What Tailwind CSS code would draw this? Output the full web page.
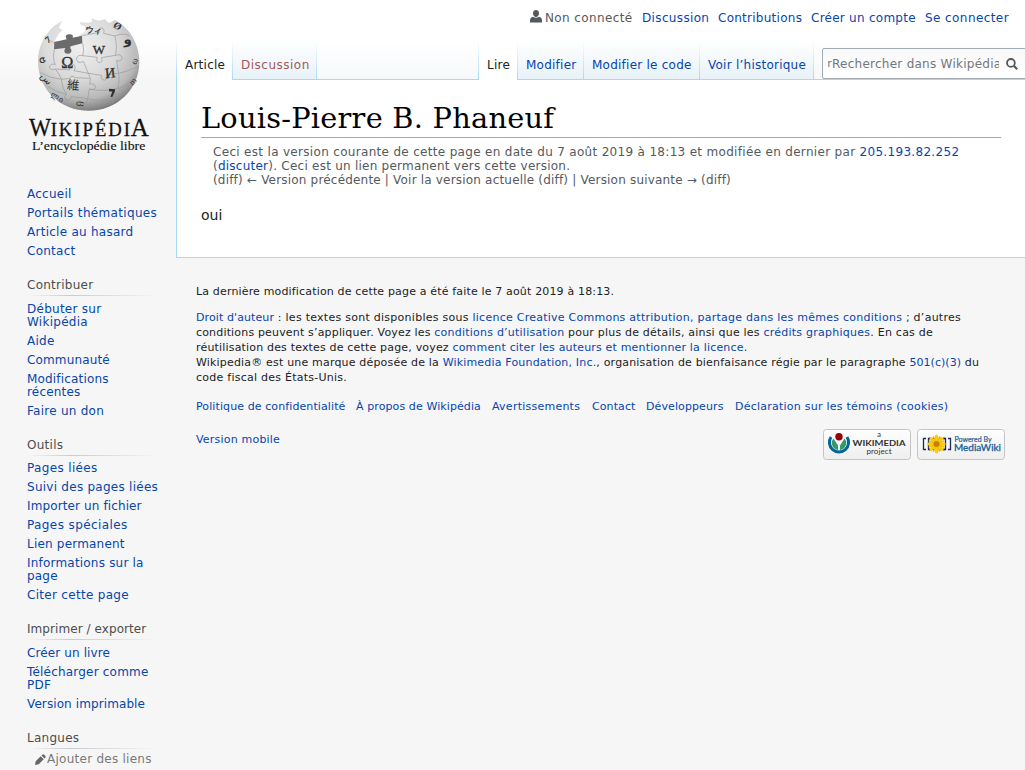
<!DOCTYPE html>
<html lang="fr">
<head>
<meta charset="utf-8">
<title>Louis-Pierre B. Phaneuf — Wikipédia</title>
<script src="https://cdn.jsdelivr.net/npm/@tailwindcss/browser@4"></script>
</head>
<body class="h-[770px] overflow-hidden bg-[#f6f6f6] font-['DejaVu_Sans',sans-serif] text-xs text-[#222]">
<div class="flex h-[770px] w-[1025px] overflow-hidden bg-[linear-gradient(#fff_0,#fff_40px,#f6f6f6_80px)]">

  <!-- Sidebar -->
  <aside class="w-[176px] shrink-0 whitespace-nowrap text-[#0645ad]">
    <a class="block h-[184px] pl-5 pt-[10px]">
      <svg width="140" height="150" viewBox="0 0 420 450">
        <defs>
          <radialGradient id="g" cx=".42" cy=".3" r=".72"><stop offset="0" stop-color="#f0f0f0"/><stop offset=".5" stop-color="#dadada"/><stop offset=".8" stop-color="#b8b8b8"/><stop offset="1" stop-color="#777"/></radialGradient>
        </defs>
        <path d="M133 30C84 50 54 102 54 155C54 239 122 302 206 302C290 302 358 239 358 155C358 100 326 50 284 30L270 38Q262 40 256 28L236 32L214 25Q222 36 206 38L180 37Q179 48 194 47Q200 58 190 68L176 74L186 90L104 94L117 70L128 61L117 54L124 36Z" fill="url(#g)"/>
        <path d="M103 96L140 88Q132 75 146 73Q162 72 158 83L186 77L187 100L152 109Q148 114 154 119Q156 130 143 131Q127 130 136 114L102 118Z" fill="#6b6b6b"/>
        <g fill="none" stroke="#999" stroke-width="2">
          <path d="M74 78Q88 92 101 98M103 118Q97 146 106 164Q92 158 88 171Q92 184 106 177Q120 194 124 208M124 208Q90 205 61 188M106 177L150 180Q146 164 158 162Q170 168 162 182L205 190M188 100Q194 122 188 137Q172 132 169 148Q174 163 190 154L205 190M188 137L232 142Q226 154 238 158Q251 155 244 143L287 136M187 77L238 67Q234 52 247 54Q256 60 251 70L285 78M285 78Q293 110 287 136Q302 130 307 144Q302 157 290 151L296 190M285 78Q311 67 327 77M296 190Q325 184 354 170M205 190Q216 206 209 222Q226 220 227 233Q220 244 208 237Q205 266 197 284M205 190L244 196Q242 208 253 211Q265 206 260 194L296 190M296 190Q300 214 293 235Q309 236 305 249Q298 255 287 250L276 281M124 208Q126 234 139 253Q129 259 137 269Q151 274 154 260L204 266M124 208L150 205Q154 193 165 203L209 205M82 228Q106 245 139 253M209 237Q252 246 293 235Q319 226 343 211M204 266Q238 277 276 264"/>
        </g>
        <g fill="#303030" font-family="Liberation Serif,serif" text-anchor="middle">
          <text x="142" y="175" font-size="49" stroke="#303030">Ω</text>
          <text x="237" y="133" font-size="39" stroke="#303030">W</text>
          <text x="271" y="203" font-size="43" transform="rotate(-6 271 190)" stroke="#303030">И</text>
          <text x="160" y="239" font-size="37" font-family="Noto Sans CJK JP,sans-serif" transform="rotate(5 160 225)">維</text>
          <path d="M267 236L286 238L284 246L277 261L271 260L277 245L267 244Z"/>
          <text x="84" y="99" font-size="29" font-weight="bold" transform="rotate(-35 84 90)">7</text>
          <text x="70" y="159" font-size="34" font-weight="bold" transform="rotate(70 70 148)">ဗ</text>
          <text x="77" y="215" font-size="30" font-family="DejaVu Sans,sans-serif" transform="rotate(50 77 208)">س</text>
          <text x="220" y="69" font-size="25" font-weight="bold" transform="rotate(8 220 60)">ウィ</text>
          <text x="292" y="58" font-size="30" font-weight="bold" transform="rotate(35 292 49)">Ø</text>
          <text x="323" y="102" font-size="40" font-weight="bold" font-family="DejaVu Sans,sans-serif" transform="rotate(-5 323 98)">و</text>
          <text x="342" y="163" font-size="27" transform="rotate(-65 342 153)">ω</text>
          <text x="339" y="222" font-size="26" transform="rotate(-50 339 214)">m</text>
          <text x="112" y="269" font-size="24" transform="rotate(30 112 260)">ლი</text>
          <text x="184" y="290" font-size="28" transform="rotate(100 184 281)">ც</text>
        </g>
        <g fill="#111" font-family="Liberation Serif,serif" stroke="#111" stroke-width=".8">
          <text x="27" y="377" font-size="76" textLength="66" lengthAdjust="spacingAndGlyphs">W</text>
          <text x="92" y="377" font-size="56" textLength="238" lengthAdjust="spacing">IKIPÉD<tspan>I</tspan></text>
          <text x="332" y="377" font-size="76" textLength="54" lengthAdjust="spacingAndGlyphs">A</text>
          <text x="36" y="419" font-size="38" textLength="340" lengthAdjust="spacingAndGlyphs" stroke-width=".4">L’encyclopédie libre</text>
        </g>
      </svg>
    </a>
    <nav class="ml-[27px] leading-[13px] tracking-[0.26px] [&_li]:pb-[2px] [&_li]:pt-[4px] [&_h3]:mt-4 [&_h3]:h-[19px] [&_h3]:pt-[3px] [&_h3]:text-[#4d4d4d]">
      <ul><li>Accueil</li><li class="tracking-[0.33px]">Portails thématiques</li><li>Article au hasard</li><li>Contact</li></ul>
      <h3>Contribuer</h3><div class="h-px w-[132px] bg-linear-to-r from-[#f6f6f6] via-[#c8ccd1] via-33% to-[#f6f6f6]"></div>
      <ul class="pt-[3px]"><li>Débuter sur<br>Wikipédia</li><li>Aide</li><li class="tracking-[0.15px]">Communauté</li><li class="tracking-[0.18px]">Modifications<br>récentes</li><li>Faire un don</li></ul>
      <h3>Outils</h3><div class="h-px w-[132px] bg-linear-to-r from-[#f6f6f6] via-[#c8ccd1] via-33% to-[#f6f6f6]"></div>
      <ul class="pt-[2px]"><li class="tracking-[0.35px]">Pages liées</li><li>Suivi des pages liées</li><li class="tracking-[0.12px]">Importer un fichier</li><li class="tracking-[0.4px]">Pages spéciales</li><li class="tracking-[0.2px]">Lien permanent</li><li class="tracking-[0.2px]">Informations sur la<br>page</li><li class="tracking-[0.3px]">Citer cette page</li></ul>
      <h3 class="tracking-[0.07px]">Imprimer / exporter</h3><div class="h-px w-[132px] bg-linear-to-r from-[#f6f6f6] via-[#c8ccd1] via-33% to-[#f6f6f6]"></div>
      <ul class="pt-[3px]"><li class="tracking-[0.12px]">Créer un livre</li><li class="tracking-[0.2px]">Télécharger comme<br>PDF</li><li class="tracking-[0.1px]">Version imprimable</li></ul>
      <h3>Langues</h3><div class="h-px w-[132px] bg-linear-to-r from-[#f6f6f6] via-[#c8ccd1] via-33% to-[#f6f6f6]"></div>
      <div class="flex items-center pl-2 pt-1 text-[#797979]">
        <svg class="mr-[1px] h-[11px] w-[11px] -mt-px" viewBox="0 0 11 11" fill="#666"><path d="M0 11L.7 7.200L5.700 2.300L8.700 5.200L3.800 10.200ZM6.500 1.500L7.500.5Q8.200 0 8.900.6L10.400 2.100Q11 2.800 10.500 3.500L9.500 4.400Z"/></svg>Ajouter des liens
      </div>
    </nav>
  </aside>

  <!-- Main column -->
  <div class="w-[849px] shrink-0 whitespace-nowrap">
    <header class="h-10 bg-white pt-[11px]">
      <ul class="flex pl-[354px] leading-[14px] tracking-[0.26px] text-[#0645ad]">
        <li class="flex w-[112px] tracking-[0.38px] text-[#54595d]"><svg class="-mt-px mr-[3px] h-[13px] w-3" viewBox="0 0 12 13" fill="#54595d"><path d="M6 0C8 0 9 1.400 9 3.300S7.800 7 6 7S3 5.200 3 3.300S4 0 6 0ZM3 6.700Q6 9 9 6.700Q12 7.500 12 10.500V12.500H0V10.500Q0 7.500 3 6.700Z"/></svg>Non connecté</li>
        <li class="w-[76px] tracking-[0.35px]">Discussion</li><li class="w-[93px]">Contributions</li><li class="w-[114px]">Créer un compte</li><li class="tracking-[0.42px]">Se connecter</li>
      </ul>
    </header>

    <div class="relative h-10 leading-[14px] tracking-[0.24px] text-[#0645ad]">
      <div class="absolute inset-x-0 bottom-0 h-px bg-[#a7d7f9]"></div>
      <div class="relative flex h-10 w-full overflow-hidden *:shrink-0">
        <div class="w-px bg-linear-to-b from-white to-[#a7d7f9]"></div>
        <div class="w-[55px] bg-white pl-2 pt-[18px] text-[#222]">Article</div>
        <div class="w-px bg-linear-to-b from-white to-[#a7d7f9]"></div>
        <div class="mb-px w-[83px] bg-linear-to-b from-white to-[#e8f2f8] pl-2 pt-[18px] tracking-[0.5px] text-[#a55858]">Discussion</div>
        <div class="w-px bg-linear-to-b from-white to-[#a7d7f9]"></div>
        <div class="mb-px w-[161px] bg-linear-to-b from-white to-[#f6f9fb]"></div>
        <div class="w-px bg-linear-to-b from-white to-[#a7d7f9]"></div>
        <div class="w-[38px] bg-white pl-2 pt-[18px] text-[#222]">Lire</div>
        <div class="w-px bg-linear-to-b from-white to-[#a7d7f9]"></div>
        <div class="mb-px w-[65px] bg-linear-to-b from-white to-[#e8f2f8] pl-2 pt-[18px]">Modifier</div>
        <div class="w-px bg-linear-to-b from-white to-[#a7d7f9]"></div>
        <div class="mb-px w-[115px] bg-linear-to-b from-white to-[#e8f2f8] pl-2 pt-[18px]">Modifier le code</div>
        <div class="w-px bg-linear-to-b from-white to-[#a7d7f9]"></div>
        <div class="mb-px w-[113px] bg-linear-to-b from-white to-[#e8f2f8] pl-2 pt-[18px]">Voir l’historique</div>
        <div class="w-px bg-linear-to-b from-white to-[#a7d7f9]"></div>
        <div class="pl-2 pt-2">
          <div class="flex h-[31px] w-[220px] items-center rounded-xs border border-[#a2a9b1] bg-linear-to-b from-[#f8f8f8] to-white pl-[5px] text-[#72777d]">
            <span class="flex w-1 justify-end overflow-hidden text-[11px]">r</span>
            <span class="w-[167px] overflow-hidden tracking-[0.26px]">Rechercher dans Wikipédia</span>
            <svg class="ml-[7px] h-3 w-3" viewBox="0 0 12 12" fill="none" stroke="#54595d"><circle cx="4.900" cy="4.900" r="3.900" stroke-width="1.800"/><path d="M7.800 7.800L11.200 11.200" stroke-width="2.200"/></svg>
          </div>
        </div>
      </div>
    </div>

    <main class="h-[178px] border-b border-l border-[#a7d7f9] bg-white pl-6 pt-[20px]">
      <h1 class="h-[38px] w-[800px] border-b border-[#a2a9b1] font-['DejaVu_Serif',serif] text-[28.8px] leading-[36px] tracking-[0.25px] text-black">Louis-Pierre B. Phaneuf</h1>
      <div class="pl-3 pt-[7px] leading-[14px] text-[#54595d]">
        <p class="tracking-[0.315px]">Ceci est la version courante de cette page en date du 7 août 2019 à 18:13 et modifiée en dernier par <a class="text-[#0645ad]">205.193.82.252</a></p>
        <p class="tracking-[0.24px]">(<a class="text-[#0645ad]">discuter</a>). Ceci est un lien permanent vers cette version.</p>
        <p class="tracking-[0.19px]">(diff) ← Version précédente | Voir la version actuelle (diff) | Version suivante → (diff)</p>
      </div>
      <p class="pt-5 text-sm leading-4">oui</p>
    </main>

    <footer class="pl-5 pt-[26px] text-[11px] leading-[15px] [&_a]:text-[#0645ad]">
      <p class="tracking-[0.16px]">La dernière modification de cette page a été faite le 7 août 2019 à 18:13.</p>
      <div class="pt-[11px]">
        <p class="tracking-[0.265px]"><a class="tracking-[0.1px]">Droit d'auteur</a> : les textes sont disponibles sous <a class="tracking-[0.25px]">licence Creative Commons attribution, partage dans les mêmes conditions</a> ; d’autres</p>
        <p class="tracking-[0.23px]"><span class="tracking-[0.17px]">conditions peuvent s’appliquer. Voyez les </span><a>conditions d’utilisation</a><span class="tracking-[0.2px]"> pour plus de détails, ainsi que les </span><a class="tracking-[0.25px]">crédits graphiques</a>. En cas de</p>
        <p class="tracking-[0.175px]">réutilisation des textes de cette page, voyez <a>comment citer les auteurs et mentionner la licence</a>.</p>
        <p class="tracking-[0.18px]">Wikipedia® est une marque déposée de la <a>Wikimedia Foundation, Inc.</a>, organisation de bienfaisance régie par le paragraphe <a class="tracking-[0.05px]">501(c)(3)</a> du</p>
        <p class="tracking-[0.25px]">code fiscal des États-Unis.</p>
      </div>
      <div class="flex pt-[14px] tracking-[0.1px]">
        <a class="w-[160px]">Politique de confidentialité</a><a class="w-[136px]">À propos de Wikipédia</a><a class="w-[100px] tracking-[0.24px]">Avertissements</a><a class="w-[54px]">Contact</a><a class="w-[89px]">Développeurs</a><a class="tracking-[0.24px]">Déclaration sur les témoins (cookies)</a>
      </div>
      <div class="flex justify-between pr-5 pt-[15px]">
        <a class="pt-[3px] tracking-[0.2px]">Version mobile</a>
        <div class="flex gap-[6px]">
          <svg width="88" height="31" viewBox="0 0 88 31">
            <defs><linearGradient id="b" x2="0" y2="1"><stop stop-color="#fff"/><stop offset="1" stop-color="#eee"/></linearGradient></defs>
            <rect x=".5" y=".5" width="87" height="30" rx="3" fill="url(#b)" stroke="#c4c4c4"/>
            <path d="M8 8A9.600 9.600 0 1 0 24 8" fill="none" stroke="#069" stroke-width="3"/>
            <path d="M10.500 9.500A7 7 0 0 0 15 21V16.500ZM21.500 9.500A7 7 0 0 1 17 21V16.500Z" fill="#396"/>
            <circle cx="16" cy="7.800" r="3.700" fill="#900"/>
            <g fill="#333" text-anchor="middle" font-family="Lato,sans-serif"><text x="56" y="7.500" font-size="8">a</text><text x="56" y="17" font-size="8" font-weight="bold" textLength="53" lengthAdjust="spacingAndGlyphs">WIKIMEDIA</text><text x="56" y="25" font-size="8" textLength="25">project</text></g>
          </svg>
          <svg width="88" height="31" viewBox="0 0 88 31">
            <rect x=".5" y=".5" width="87" height="30" rx="3" fill="url(#b)" stroke="#c4c4c4"/>
            <g fill="none" stroke="#1b2a5c" stroke-width="1.300"><path d="M9 9.500H6.500V20.500H9M31 9.500H33.500V20.500H31"/><path d="M13.500 9.500H11.500V20.500H13.500M26.500 9.500H28.500V20.500H26.500"/><path d="M12 9.500H28M12 20.500H28" stroke-dasharray="2 1.500"/></g>
            <g stroke="#fc0" stroke-width="3" stroke-linecap="round"><path d="M19.500 7V23M11.800 15H27.200M14 9.500L25 20.500M25 9.500L14 20.500"/><path d="M16.500 7.800L22.500 22.200M22.500 7.800L16.500 22.200M12.300 12L26.700 18M26.700 12L12.300 18" stroke="#f2bd10" stroke-width="1.500"/></g>
            <circle cx="19.500" cy="15" r="3" fill="#c97f08"/>
            <g fill="#1c5f96" font-family="Lato,sans-serif"><text x="37.500" y="12.500" font-size="7" stroke="#1c5f96" stroke-width=".2" textLength="37">Powered By</text><text x="37" y="22" font-size="9.500" stroke="#1c5f96" stroke-width=".3" textLength="47" lengthAdjust="spacingAndGlyphs">MediaWiki</text></g>
          </svg>
        </div>
      </div>
    </footer>
  </div>
</div>
</body>
</html>
